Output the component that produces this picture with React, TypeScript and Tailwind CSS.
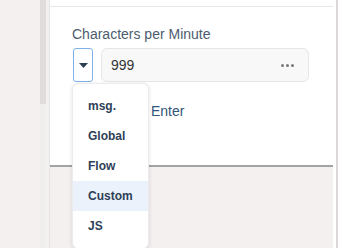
import React from "react";

const options = ["msg.", "Global", "Flow", "Custom", "JS"];

function SpeedDropdown() {
  return (
    <div className="absolute left-0 top-[35px] w-[77px] rounded-md bg-white py-[7px] shadow-[0_1px_4px_rgba(0,0,0,0.12)] border border-[#ececec]">
      {options.map((opt) => (
        <div
          key={opt}
          className={
            "h-[30px] flex items-center pl-[15px] text-[12px] font-bold text-[#2e4057] " +
            (opt === "Custom" ? "bg-[#ebf2fb]" : "")
          }
        >
          {opt}
        </div>
      ))}
    </div>
  );
}

export default function App() {
  return (
    <div
      className="w-[338px] h-[248px] flex overflow-hidden bg-[#f4f0ef]"
      style={{ fontFamily: '"Liberation Sans", Arial, sans-serif' }}
    >
      {/* sidebar */}
      <div className="w-[40px] bg-[#f4f0ef]" />
      <div className="w-[6px] flex flex-col bg-[#f0eded]">
        <div className="h-[104px] bg-[#e0dcdb]" />
      </div>
      <div className="w-[3px] bg-[#f2f0f0]" />
      <div className="w-[1px] bg-[#e6e3e3]" />

      {/* main */}
      <div className="flex-1 flex flex-col">
        <div className="h-[167px] bg-white border-b-2 border-[#a3a3a3] flex flex-col">
          <div className="h-[7px] border-b border-[#e6e6e6]" />
          <div className="pl-[22px] pr-[24px] pt-[19px]">
            <div className="text-[14px] leading-[16px] text-[#4c5c6e]">Characters per Minute</div>
            <div className="relative mt-[6px] flex gap-[8px]">
              <button className="w-[20px] h-[34px] ml-px rounded-[3px] border border-[#80b1ea] bg-white flex items-center justify-center">
                <svg width="9" height="5" viewBox="0 0 9 5">
                  <path d="M0 0 L9 0 L4.5 5 Z" fill="#2c3e50" />
                </svg>
              </button>
              <div className="flex-1 h-[34px] rounded-[6px] border border-[#e6e6e6] bg-[#f8f8f8] flex items-center pl-[9px] pr-[14px]">
                <span className="flex-1 text-[14px] text-[#333]">999</span>
                <span className="flex gap-[2px]">
                  <span className="w-[3px] h-[3px] rounded-full bg-[#777]" />
                  <span className="w-[3px] h-[3px] rounded-full bg-[#777]" />
                  <span className="w-[3px] h-[3px] rounded-full bg-[#777]" />
                </span>
              </div>
              <SpeedDropdown />
            </div>
            <div className="mt-[19px] text-[14px] text-[#34557a] pl-[79px]">Enter</div>
          </div>
        </div>
      </div>
      <div className="w-[3px] bg-white" />
      <div className="w-[2px] bg-[#dcd8d7]" />
    </div>
  );
}
